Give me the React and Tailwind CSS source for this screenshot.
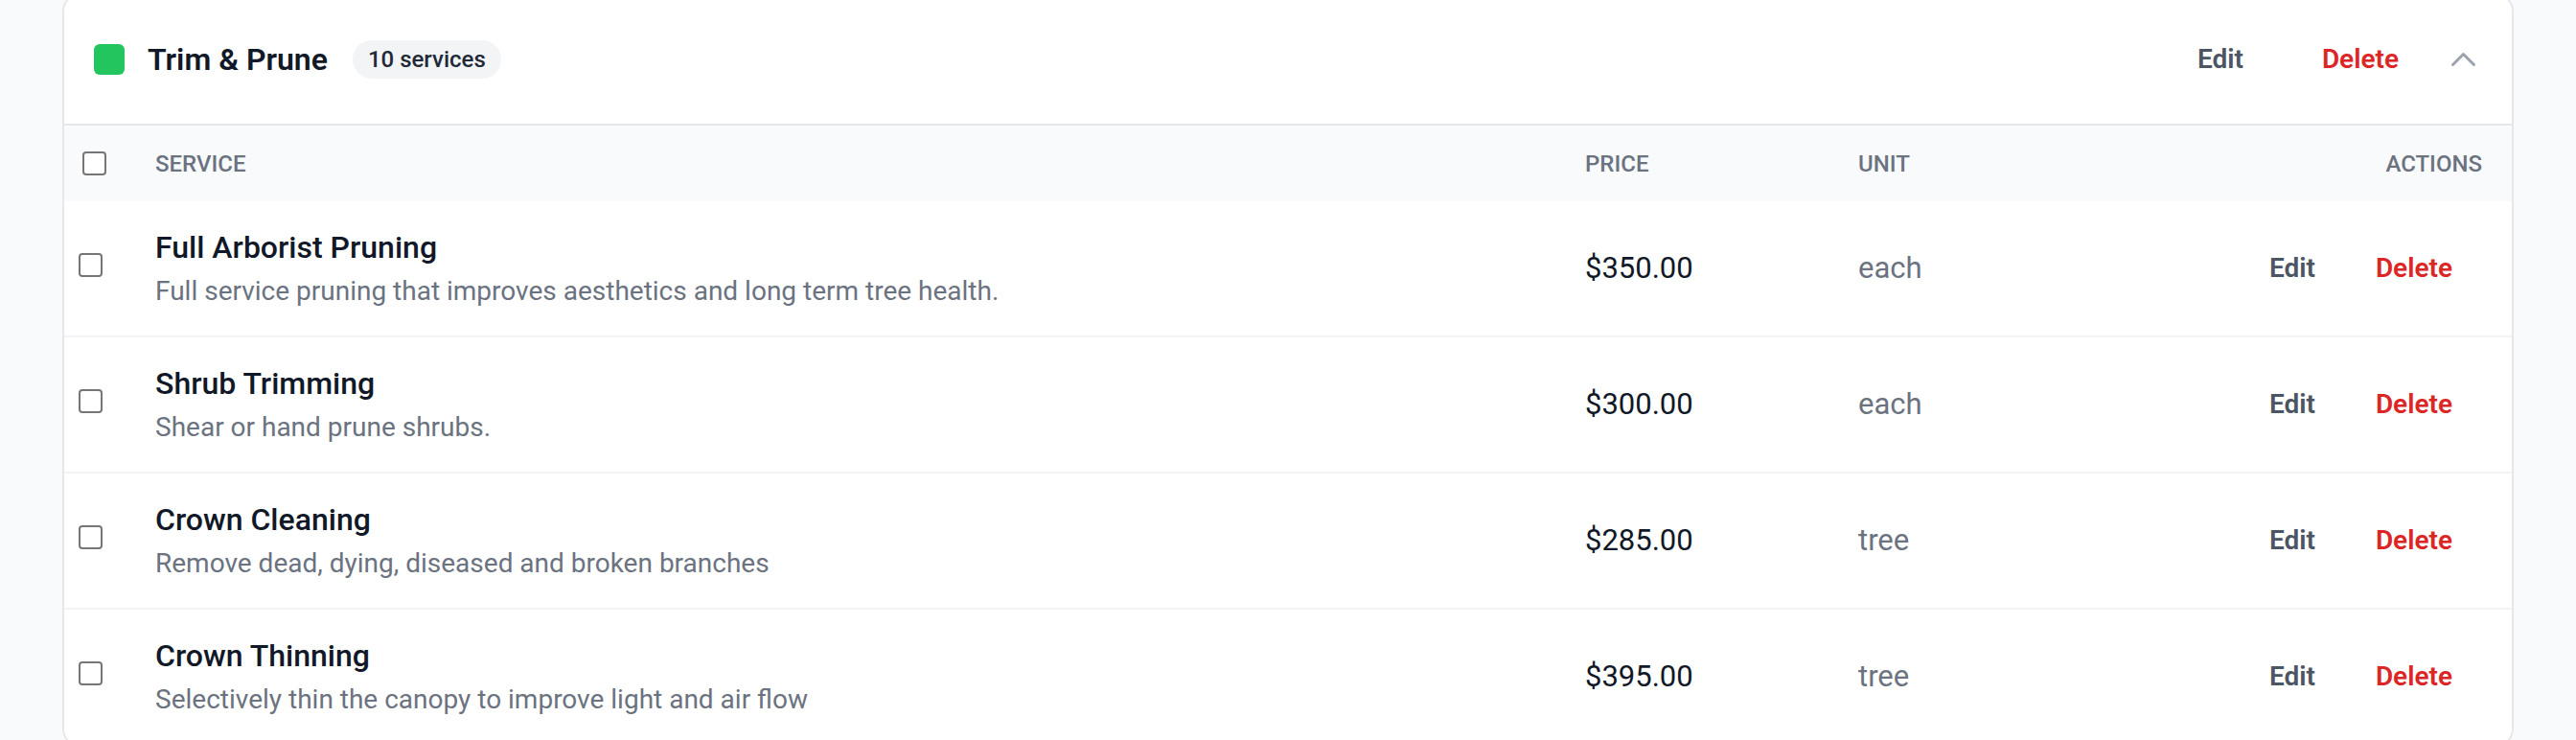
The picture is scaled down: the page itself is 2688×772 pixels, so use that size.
import React from 'react';

const services = [
    { name: 'Full Arborist Pruning', desc: 'Full service pruning that improves aesthetics and long term tree health.', price: '$350.00', unit: 'each' },
    { name: 'Shrub Trimming', desc: 'Shear or hand prune shrubs.', price: '$300.00', unit: 'each' },
    { name: 'Crown Cleaning', desc: 'Remove dead, dying, diseased and broken branches', price: '$285.00', unit: 'tree' },
    { name: 'Crown Thinning', desc: 'Selectively thin the canopy to improve light and air flow', price: '$395.00', unit: 'tree' },
];

const Checkbox = ({ className = '' }) => (
    <input
        type="checkbox"
        className={`appearance-none w-[25px] h-[25px] border-2 border-[#767676] rounded-[4px] bg-white cursor-pointer ${className}`}
    />
);

const ChevronUp = () => (
    <svg width="28" height="18" viewBox="0 0 28 18" fill="none" className="text-[#9ca3af]">
        <path d="M2.5 14.5 L13.5 3.5 L24.5 14.5" stroke="currentColor" strokeWidth="3" strokeLinecap="round" strokeLinejoin="round" />
    </svg>
);

const App = () => {
    return (
        <div className="min-h-screen bg-[#f9fafb] px-[65px] font-['Roboto',sans-serif] overflow-hidden">
            <div className="-mt-[8px] bg-white border-2 border-[#e5e7eb] rounded-[20px] overflow-hidden">
                {/* category header */}
                <div className="h-[137px] flex items-center justify-between pl-[31px] pr-[36px] border-b-2 border-[#e5e7eb]">
                    <div className="flex items-center">
                        <span className="w-[32px] h-[32px] rounded-[6px] bg-[#22c55e]"></span>
                        <h2 className="ml-[24px] text-[32px] font-semibold text-[#111827]">Trim &amp; Prune</h2>
                        <span className="ml-[26px] h-[40px] px-[16px] flex items-center rounded-full bg-[#f3f4f6] text-[24px] font-medium text-[#1f2937]">10 services</span>
                    </div>
                    <div className="flex items-center">
                        <button className="text-[28px] font-semibold text-[#4b5563]">Edit</button>
                        <button className="ml-[82px] text-[28px] font-semibold text-[#dc2626]">Delete</button>
                        <button className="ml-[54px] flex items-center"><ChevronUp /></button>
                    </div>
                </div>

                {/* table head */}
                <div className="grid grid-cols-[74px_1fr_285px_285px_418px] h-[79px] items-center bg-[#f9fafb] text-[24px] font-medium text-[#6b7280] uppercase">
                    <div className="pl-[19px] flex items-center"><Checkbox /></div>
                    <div className="pl-[21px]">Service</div>
                    <div className="pl-[21px]">Price</div>
                    <div className="pl-[21px]">Unit</div>
                    <div className="pr-[31px] text-right">Actions</div>
                </div>

                {/* rows */}
                {services.map((s) => (
                    <div key={s.name} className="grid grid-cols-[74px_1fr_285px_285px_418px] h-[142px] items-center border-b-2 border-[#f3f4f6]">
                        <div className="pl-[15px] flex items-center mb-[7px]"><Checkbox /></div>
                        <div className="pl-[21px]">
                            <div className="text-[32px] leading-[42px] font-medium text-[#111827]">{s.name}</div>
                            <div className="mt-[6px] text-[28px] leading-[38px] text-[#6b7280]">{s.desc}</div>
                        </div>
                        <div className="pl-[21px] text-[31px] text-[#111827]">{s.price}</div>
                        <div className="pl-[21px] text-[31px] text-[#6b7280]">{s.unit}</div>
                        <div className="pr-[62px] flex justify-end items-center gap-[63px] text-[28px] font-semibold">
                            <button className="text-[#4b5563]">Edit</button>
                            <button className="text-[#dc2626]">Delete</button>
                        </div>
                    </div>
                ))}
            </div>
        </div>
    );
};

export default App;
